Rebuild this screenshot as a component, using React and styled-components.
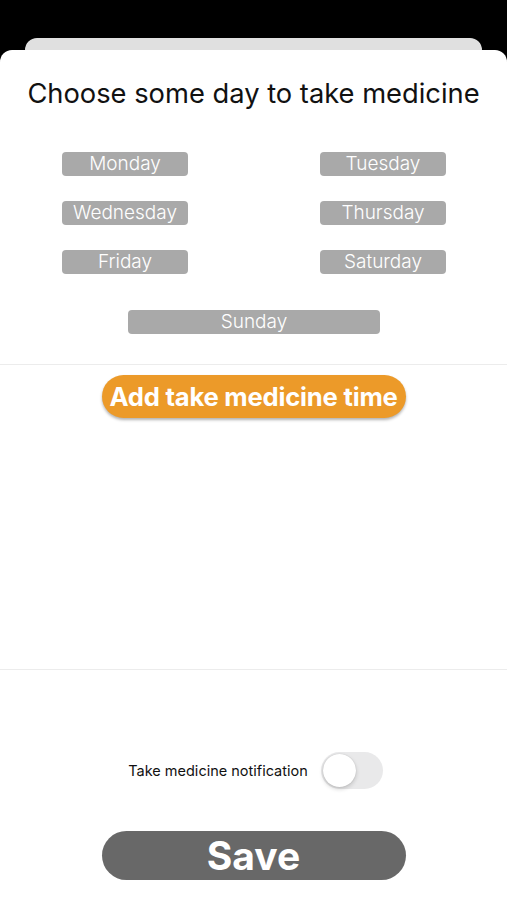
import React, { useState } from 'react';
import styled, { createGlobalStyle } from 'styled-components';

const GlobalStyle = createGlobalStyle`
  html, body {
    margin: 0;
    padding: 0;
    background: #000;
  }
  body {
    font-family: Inter, "Liberation Sans", Arial, sans-serif;
  }
`;

const Screen = styled.div`
  width: 507px;
  height: 900px;
  background: #000;
  display: flex;
  flex-direction: column;
  overflow: hidden;
`;

const BackCard = styled.div`
  margin: 38px 25px 0;
  height: 12px;
  background: #e0e0e0;
  border-radius: 12px 12px 0 0;
`;

const Sheet = styled.div`
  flex: 1;
  background: #fff;
  border-radius: 12px 12px 0 0;
  display: flex;
  flex-direction: column;
`;

const Title = styled.h1`
  margin: 27px 0 0;
  font-size: 27.3px;
  line-height: 33px;
  font-weight: 400;
  color: #111;
  text-align: center;
  letter-spacing: 0;
`;

const DaysGrid = styled.div`
  display: grid;
  grid-template-columns: 126px 126px;
  justify-content: space-between;
  row-gap: 25px;
  padding: 0 61px 0 62px;
  margin-top: 42px;
`;

const DayButton = styled.button`
  height: 24px;
  width: ${p => (p.$wide ? '252px' : '126px')};
  border: none;
  border-radius: 4px;
  background: ${p => (p.$active ? '#ec9a29' : '#a9a9a9')};
  color: #fff;
  font-family: Inter, "Liberation Sans", Arial, sans-serif;
  font-size: 19px;
  font-weight: 350;
  padding: 0;
  line-height: 24px;
  cursor: pointer;
`;

const SundayRow = styled.div`
  display: flex;
  justify-content: center;
  margin-top: 36px;
  padding-left: 1px;
`;

const Divider = styled.div`
  height: 1px;
  background: #ececec;
  margin-top: ${p => p.$top}px;
`;

const TimeSection = styled.div`
  display: flex;
  justify-content: center;
  padding-top: 10px;
  height: 294px;
  box-sizing: border-box;
`;

const AddButton = styled.button`
  width: 304px;
  height: 43px;
  border: none;
  border-radius: 22px;
  background: #ec9a29;
  color: #fff;
  font-family: Inter, "Liberation Sans", Arial, sans-serif;
  font-size: 25.6px;
  font-weight: 700;
  box-shadow: 0 2px 3px rgba(0, 0, 0, 0.3);
  padding: 0;
  letter-spacing: -0.2px;
`;

const NotifyRow = styled.div`
  display: flex;
  align-items: center;
  justify-content: center;
  gap: 13px;
  margin-top: 82px;
  padding-left: 4px;
`;

const NotifyLabel = styled.span`
  font-size: 14.5px;
  color: #111;
`;

const Switch = styled.button`
  width: 62px;
  height: 37px;
  border: none;
  border-radius: 19px;
  background: ${p => (p.$on ? '#34c759' : '#e9e9ea')};
  padding: 2px;
  display: flex;
  justify-content: ${p => (p.$on ? 'flex-end' : 'flex-start')};
  cursor: pointer;
`;

const Knob = styled.span`
  width: 33px;
  height: 33px;
  border-radius: 50%;
  background: #fff;
  box-shadow: 0 2px 4px rgba(0, 0, 0, 0.18), 0 0 1px rgba(0, 0, 0, 0.2);
`;

const SaveRow = styled.div`
  display: flex;
  justify-content: center;
  margin-top: 42px;
`;

const SaveButton = styled.button`
  width: 304px;
  height: 49px;
  border: none;
  border-radius: 25px;
  background: #686868;
  color: #fff;
  font-family: Inter, "Liberation Sans", Arial, sans-serif;
  font-size: 39px;
  font-weight: 700;
  padding: 0;
`;

const days = ['Monday', 'Tuesday', 'Wednesday', 'Thursday', 'Friday', 'Saturday'];

export default function App() {
  const [notify, setNotify] = useState(false);

  return (
    <>
      <GlobalStyle />
      <Screen>
        <BackCard />
        <Sheet>
          <Title>Choose some day to take medicine</Title>
          <DaysGrid>
            {days.map(d => (
              <DayButton key={d}>{d}</DayButton>
            ))}
          </DaysGrid>
          <SundayRow>
            <DayButton $wide>Sunday</DayButton>
          </SundayRow>
          <Divider $top={30} />
          <TimeSection>
            <AddButton>Add take medicine time</AddButton>
          </TimeSection>
          <Divider $top={10} />
          <NotifyRow>
            <NotifyLabel>Take medicine notification</NotifyLabel>
            <Switch $on={notify} onClick={() => setNotify(!notify)}>
              <Knob />
            </Switch>
          </NotifyRow>
          <SaveRow>
            <SaveButton>Save</SaveButton>
          </SaveRow>
        </Sheet>
      </Screen>
    </>
  );
}
